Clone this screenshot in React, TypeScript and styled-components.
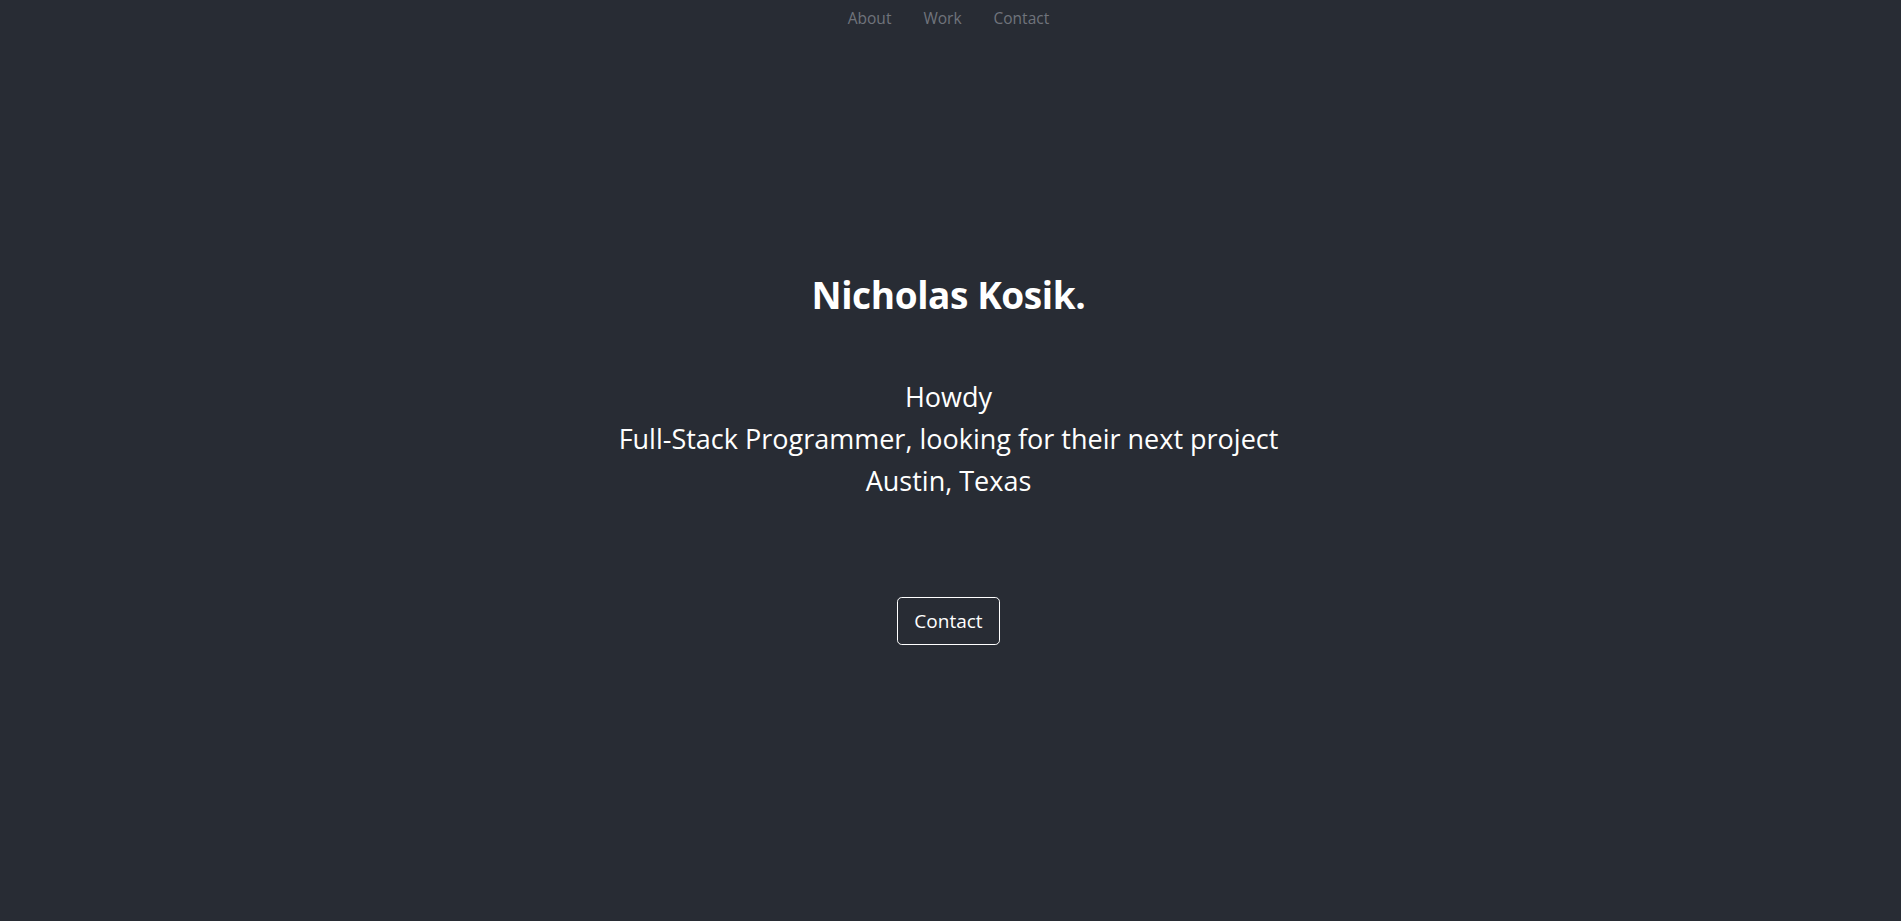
import React from "react";
import styled, { createGlobalStyle } from "styled-components";

const GlobalStyle = createGlobalStyle`
  html, body {
    margin: 0;
    padding: 0;
    background: #282c34;
  }
  body {
    font-family: "Open Sans", "Noto Sans", sans-serif;
    color: #ffffff;
  }
  * { box-sizing: border-box; }
`;

const Page = styled.div`
  min-height: 100vh;
  background: #282c34;
  display: flex;
  flex-direction: column;
  padding-right: 4px;
`;

const Nav = styled.nav`
  display: flex;
  justify-content: center;
`;

const NavLink = styled.a`
  display: block;
  padding: 6px 16px;
  font-size: 15.5px;
  line-height: 24px;
  color: #70747c;
  text-decoration: none;
`;

const Hero = styled.main`
  display: flex;
  flex-direction: column;
  align-items: center;
  text-align: center;
  padding-top: 235px;
`;

const Title = styled.h1`
  margin: 0;
  font-size: 37px;
  line-height: 48px;
  font-weight: 700;
  letter-spacing: -0.4px;
  color: #ffffff;
`;

const Intro = styled.div`
  margin-top: 57px;
  display: flex;
  flex-direction: column;
  align-items: center;
`;

const Line = styled.p`
  margin: 0;
  font-size: 27px;
  line-height: 42px;
  font-weight: 400;
  color: #ffffff;
`;

const ContactButton = styled.button`
  margin-top: 95px;
  padding: 8px 16px;
  font-family: inherit;
  font-size: 19px;
  line-height: 30px;
  color: #ffffff;
  background: transparent;
  border: 1px solid #ffffff;
  border-radius: 4.8px;
  cursor: pointer;
`;

export default function App() {
  return (
    <>
      <GlobalStyle />
      <Page>
        <Nav>
          <NavLink href="#about">About</NavLink>
          <NavLink href="#work">Work</NavLink>
          <NavLink href="#contact">Contact</NavLink>
        </Nav>
        <Hero>
          <Title>Nicholas Kosik.</Title>
          <Intro>
            <Line>Howdy</Line>
            <Line>Full-Stack Programmer, looking for their next project</Line>
            <Line>Austin, Texas</Line>
          </Intro>
          <ContactButton>Contact</ContactButton>
        </Hero>
      </Page>
    </>
  );
}
